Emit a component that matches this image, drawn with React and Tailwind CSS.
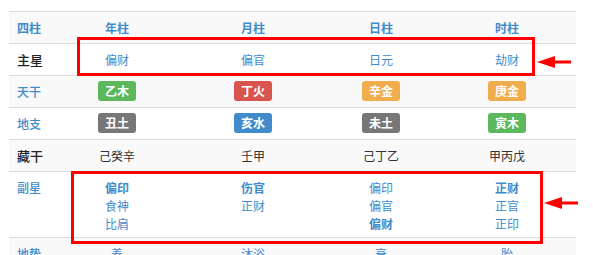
const BLUE = 'text-[#428bca]'

const cols = 'grid grid-cols-[43px_130px_142px_114px_138px]'

const badgeColor = {
  green: 'bg-[#5cb85c]',
  red: 'bg-[#d9534f]',
  orange: 'bg-[#f0ad4e]',
  gray: 'bg-[#777777]',
  blue: 'bg-[#428bca]'
}

function Badge({ text, color }) {
  return (
    <span
      className={`inline-block h-[20px] rounded-[3px] px-[7px] text-[12px] font-bold leading-[20px] text-white ${badgeColor[color]}`}
    >
      {text}
    </span>
  )
}

function Row({ label, labelClass, striped, children, badges, className = '' }) {
  return (
    <div
      className={`${cols} border-t border-[#dddddd] ${striped ? 'bg-[#f9f9f9]' : 'bg-white'} ${className}`}
    >
      <div className={`pl-2 pt-[7px] ${labelClass}`}>{label}</div>
      {children.map((c, i) => (
        <div key={i} className={`flex flex-col items-center ${badges ? 'pt-[5px]' : 'pt-[7px]'}`}>
          {c}
        </div>
      ))}
    </div>
  )
}

function Stack({ items }) {
  return items.map(([t, bold], i) => (
    <span key={i} className={bold ? 'font-bold' : ''}>
      {t}
    </span>
  ))
}

function Arrow({ className }) {
  return (
    <svg className={`absolute ${className}`} width="34" height="14" viewBox="0 0 34 14">
      <polygon points="0,7 18,1 18,13" fill="#ff0000" />
      <rect x="16" y="5.5" width="18" height="3" fill="#ff0000" />
    </svg>
  )
}

export default function App() {
  return (
    <div
      className="relative h-[255px] w-[593px] overflow-hidden bg-white pl-[9px] pt-[11px] text-[12px] leading-[18px] text-[#333333]"
      style={{ fontFamily: '"Noto Sans CJK SC", "Noto Sans", sans-serif' }}
    >
      <div className="w-[567px]">
        <Row label="四柱" labelClass={`${BLUE} font-bold`} striped className={`h-[32px] ${BLUE} font-bold`}>
          {['年柱', '月柱', '日柱', '时柱'].map((t) => (
            <span key={t}>{t}</span>
          ))}
        </Row>
        <Row label="主星" labelClass="text-[#222222] text-[13px] font-medium" className={`h-[32px] ${BLUE}`}>
          {['偏财', '偏官', '日元', '劫财'].map((t) => (
            <span key={t}>{t}</span>
          ))}
        </Row>
        <Row label="天干" labelClass={`${BLUE} font-medium`} striped badges className="h-[32px]">
          {[
            ['乙木', 'green'],
            ['丁火', 'red'],
            ['辛金', 'orange'],
            ['庚金', 'orange']
          ].map(([t, c]) => (
            <Badge key={t} text={t} color={c} />
          ))}
        </Row>
        <Row label="地支" labelClass={`${BLUE} font-medium`} badges className="h-[32px]">
          {[
            ['丑土', 'gray'],
            ['亥水', 'blue'],
            ['未土', 'gray'],
            ['寅木', 'green']
          ].map(([t, c]) => (
            <Badge key={t} text={t} color={c} />
          ))}
        </Row>
        <Row label="藏干" labelClass="text-[#222222] text-[13px] font-medium" striped className="h-[32px]">
          {['己癸辛', '壬甲', '己丁乙', '甲丙戊'].map((t) => (
            <span key={t}>{t}</span>
          ))}
        </Row>
        <Row label="副星" labelClass={`${BLUE} font-medium`} className={`h-[66px] ${BLUE}`}>
          {[
            [['偏印', true], ['食神'], ['比肩']],
            [['伤官', true], ['正财']],
            [['偏印'], ['偏官'], ['偏财', true]],
            [['正财', true], ['正官'], ['正印']]
          ].map((items, i) => (
            <Stack key={i} items={items} />
          ))}
        </Row>
        <Row label="地势" labelClass={`${BLUE} font-medium`} striped className={`h-[32px] ${BLUE}`}>
          {['养', '沐浴', '衰', '胎'].map((t) => (
            <span key={t}>{t}</span>
          ))}
        </Row>
      </div>

      <div className="absolute left-[77px] top-[37px] h-[39px] w-[458px] border-[3px] border-[#ff0000]" />
      <div className="absolute left-[71px] top-[171px] h-[73px] w-[472px] border-[3px] border-[#ff0000]" />
      <Arrow className="left-[537px] top-[55px]" />
      <Arrow className="left-[544px] top-[196px]" />
    </div>
  )
}
